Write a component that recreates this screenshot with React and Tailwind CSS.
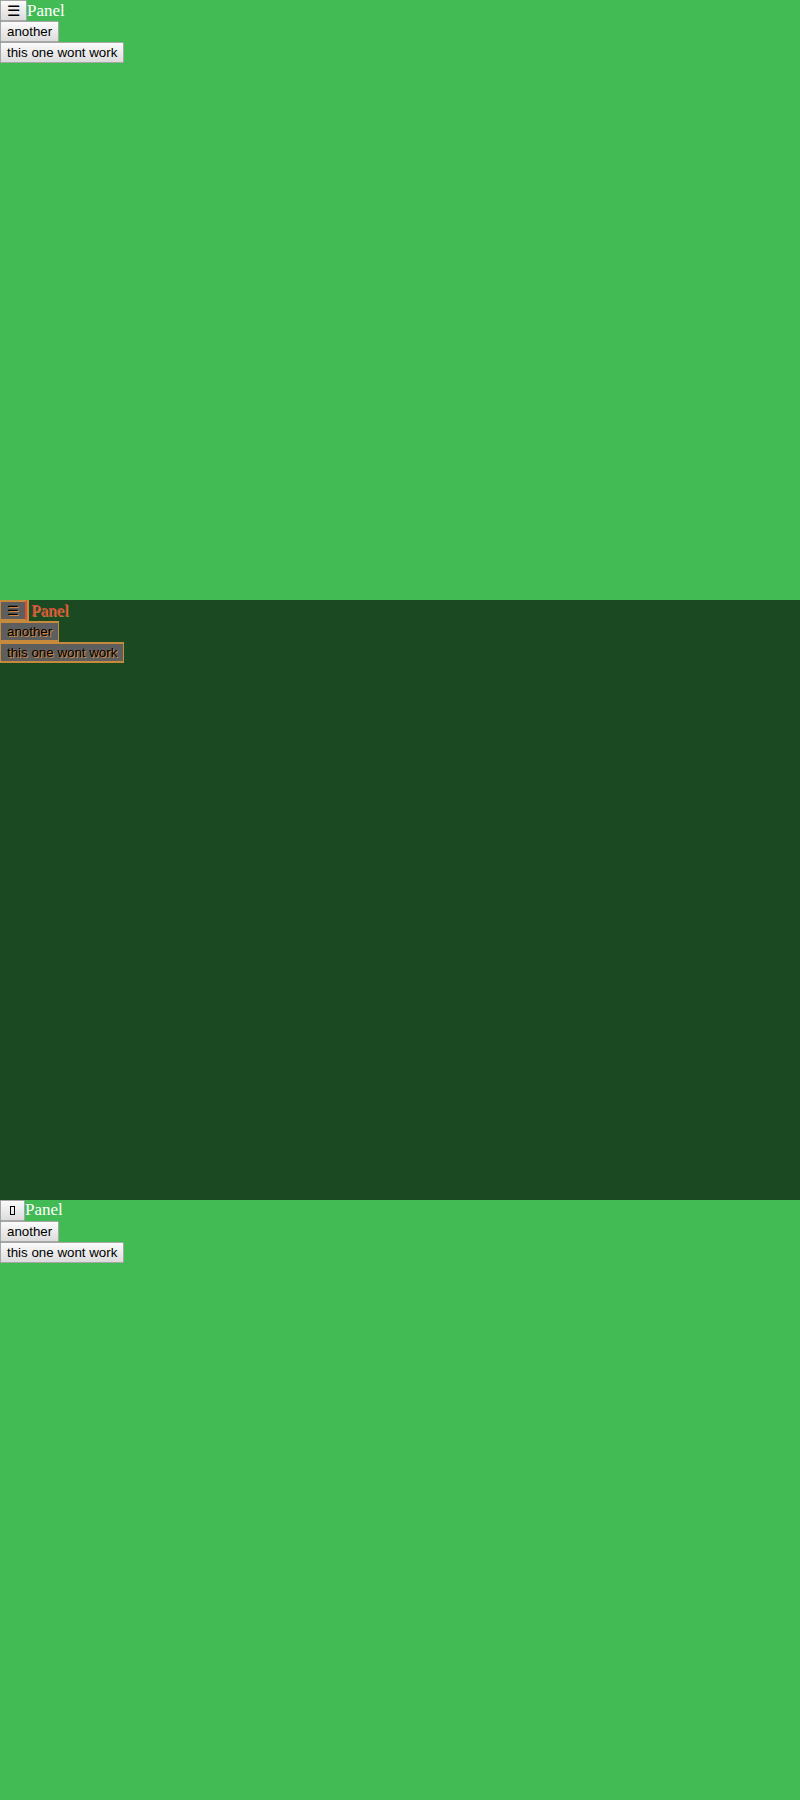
import React from "react";

const btn =
  "block border border-[#a6a6a6] bg-gradient-to-b from-[#fbfbfb] to-[#dcdcdc] px-[6px] py-[2px] text-[13.33px] leading-[15px] text-black rounded-[1px]";

const darkBtn =
  "block border-y-2 border-x border-[#c58a3c] bg-[#5e5e5e] px-[6px] py-[1px] text-[13.33px] leading-[15px] text-black [text-shadow:1px_1px_0_#d4873a]";

function Section({ children, dark }) {
  return (
    <div
      className={`h-[600px] leading-none ${dark ? "bg-[#1b4922]" : "bg-[#43bb54]"}`}
      style={{ fontFamily: '"Liberation Sans", Arial, sans-serif' }}
    >
      {children}
    </div>
  );
}

export default function App() {
  return (
    <div className="w-[800px]">
      <Section>
        <div className="flex items-baseline">
          <button className={`${btn} text-[15px] leading-[15px]`}>☰</button>
          <span className="text-white text-[17px] leading-[17px] font-['Liberation_Serif',serif]">Panel</span>
        </div>
        <div className="flex">
          <button className={btn}>another</button>
        </div>
        <div className="flex">
          <button className={btn}>this one wont work</button>
        </div>
      </Section>

      <Section dark>
        <div className="flex items-stretch">
          <button className={`${darkBtn} text-[#e0463a] border-r-[2px] border-r-[#e04a3a]`}>☰</button>
          <span className="pl-[2px] pt-[2px] text-[#e0463a] text-[17px] leading-[17px] font-['Liberation_Serif',serif] border-l-2 border-[#c58a3c] [text-shadow:1px_1px_0_#b8843a]">
            Panel
          </span>
        </div>
        <div className="flex">
          <button className={darkBtn}>another</button>
        </div>
        <div className="flex">
          <button className={darkBtn}>this one wont work</button>
        </div>
      </Section>

      <Section>
        <div className="flex items-baseline">
          <button className={`${btn} px-[7px]`}>
            <span className="inline-block w-[5px] h-[9px] border border-black mx-[2px]"></span>
          </button>
          <span className="text-white text-[17px] leading-[17px] font-['Liberation_Serif',serif]">Panel</span>
        </div>
        <div className="flex">
          <button className={btn}>another</button>
        </div>
        <div className="flex">
          <button className={btn}>this one wont work</button>
        </div>
      </Section>
    </div>
  );
}
